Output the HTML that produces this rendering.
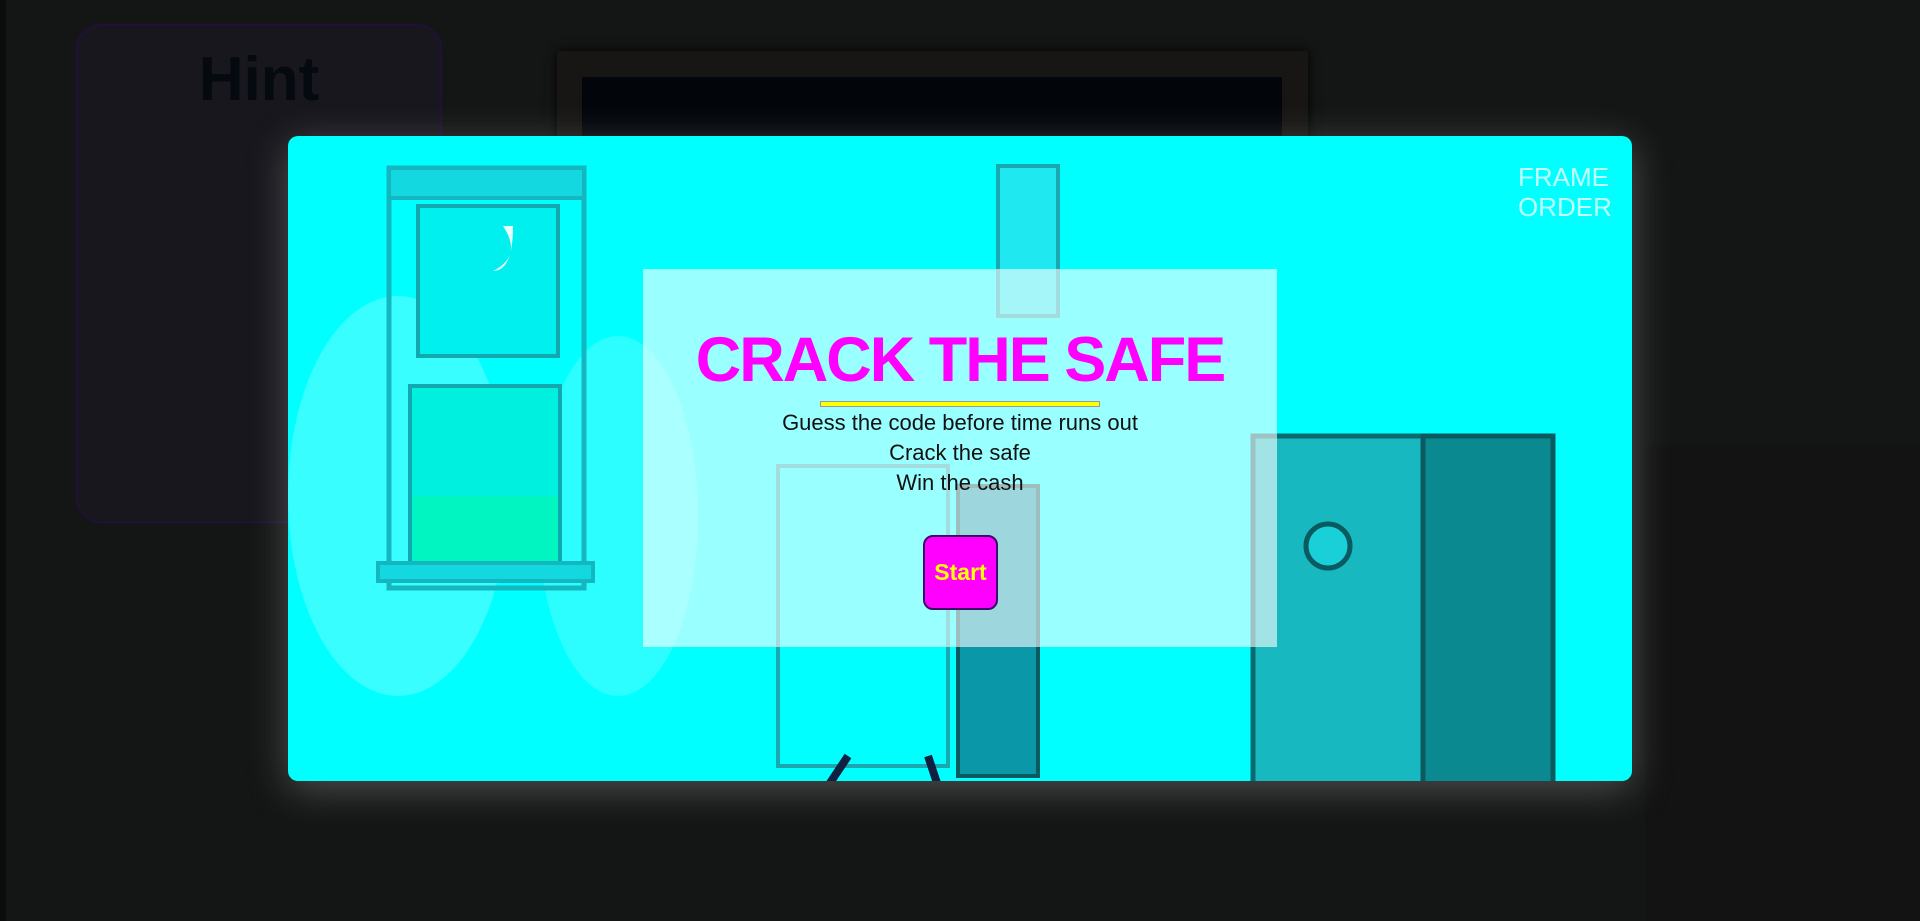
<!DOCTYPE html>
<html><head><meta charset="utf-8"><style>
html,body{margin:0;padding:0;width:1920px;height:921px;overflow:hidden;background:#141615;font-family:"Liberation Sans",sans-serif;}
.abs{position:absolute;}
</style></head><body>
<div class="abs" style="left:0;top:0;width:6px;height:921px;background:#0b0c0c"></div>
<div class="abs" style="left:557px;top:51px;width:751px;height:200px;background:#181614;box-shadow:0 0 10px #000"></div>
<div class="abs" style="left:582px;top:77px;width:700px;height:180px;background:#02060b"></div>
<div class="abs" style="left:1645px;top:445px;width:275px;height:476px;background:#121312;"></div>
<div class="abs" style="left:76px;top:24px;width:364px;height:497px;background:#17171d;border:1px solid #2a0a55;border-radius:26px;"></div>
<div class="abs" style="left:76px;top:44px;width:366px;text-align:center;font-weight:bold;font-size:62px;color:#050a10;">Hint</div>

<div class="abs" style="left:288px;top:136px;width:1344px;height:645px;border-radius:10px;background:#00ffff;overflow:hidden;box-shadow:0 8px 40px rgba(150,150,150,.45);">
  <svg width="1344" height="645" style="position:absolute;left:0;top:0">
    <ellipse cx="110" cy="360" rx="110" ry="200" fill="#7ffcff" opacity=".45"/>
    <ellipse cx="330" cy="380" rx="80" ry="180" fill="#7ffcff" opacity=".35"/>
    <rect x="101" y="32" width="195" height="420" fill="none" stroke="#14b7c0" stroke-width="5"/>
    <rect x="101" y="32" width="195" height="30" fill="#14d8e0" stroke="#14b7c0" stroke-width="4"/>
    <rect x="130" y="70" width="140" height="150" fill="#00f0f0" stroke="#12a8b0" stroke-width="4"/>
    <rect x="122" y="250" width="150" height="190" fill="#00f0e0" stroke="#12a8b0" stroke-width="4"/>
    <rect x="125" y="360" width="145" height="80" fill="#00f5c0"/>
    <path d="M215 90 q20 30 -10 45 q20 0 20 -45z" fill="#e8ffff"/>
    <rect x="90" y="427" width="215" height="18" fill="#14d8e0" stroke="#14b7c0" stroke-width="4"/>
    <rect x="710" y="30" width="60" height="150" fill="#20e8f0" stroke="#1aa8b0" stroke-width="4"/>
    <rect x="670" y="350" width="80" height="290" fill="#0a98a8" stroke="#0a5a60" stroke-width="4"/>
    <rect x="965" y="300" width="300" height="360" fill="#18b8c0" stroke="#0a6a70" stroke-width="5"/>
    <rect x="1135" y="300" width="130" height="360" fill="#0a8a90" stroke="#0a5a60" stroke-width="5"/>
    <ellipse cx="1040" cy="410" rx="22" ry="22" fill="#1ad0d8" stroke="#0a5a60" stroke-width="5"/>
    <rect x="490" y="330" width="170" height="300" fill="none" stroke="#1aa8b0" stroke-width="4"/>
    <path d="M560 620 l-20 30 M640 620 l10 30" stroke="#102040" stroke-width="8"/>
    <text x="1230" y="50" font-size="26" fill="#c0ffff" font-family="Liberation Sans">FRAME</text>
    <text x="1230" y="80" font-size="26" fill="#c0ffff" font-family="Liberation Sans">ORDER</text>
  </svg>
</div>

<div class="abs" style="left:643px;top:269px;width:634px;height:378px;background:rgba(255,255,255,.6);"></div>
<div class="abs" style="left:603px;top:329px;width:714px;text-align:center;font-weight:bold;font-size:63px;letter-spacing:-2px;color:#ff00ff;line-height:63px;white-space:nowrap;">CRACK THE SAFE</div>
<div class="abs" style="left:820px;top:401px;width:278px;height:4px;background:#ffff00;border:1px solid #999;"></div>
<div class="abs" style="left:643px;top:408px;width:634px;text-align:center;font-size:22px;line-height:30px;color:#111;">Guess the code before time runs out<br>Crack the safe<br>Win the cash</div>
<div class="abs" style="left:923px;top:535px;width:71px;height:71px;background:#ff00ff;border:2px solid #3a0a6a;border-radius:10px;display:flex;align-items:center;justify-content:center;font-weight:bold;font-size:23px;color:#ffff00;">Start</div>
</body></html>
